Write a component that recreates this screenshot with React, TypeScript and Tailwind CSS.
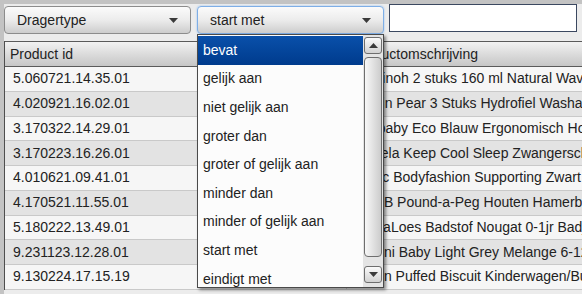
import React from "react";

const rows = [
  ["5.060721.14.35.01", "Lansinoh 2 stuks 160 ml Natural Wave Flesjes"],
  ["4.020921.16.02.01", "Muslin Pear 3 Stuks Hydrofiel Washandjes"],
  ["3.170322.14.29.01", "Minibaby Eco Blauw Ergonomisch Hoofdkussen"],
  ["3.170223.16.26.01", "Ambela Keep Cool Sleep Zwangerschapskussen"],
  ["4.010621.09.41.01", "Magic Bodyfashion Supporting Zwart Voedingsbh"],
  ["4.170521.11.55.01", "PlayrB Pound-a-Peg Houten Hamerbank"],
  ["5.180222.13.49.01", "MamaLoes Badstof Nougat 0-1jr Badjas"],
  ["9.231123.12.28.01", "Bomini Baby Light Grey Melange 6-12m"],
  ["9.130224.17.15.19", "Jollein Puffed Biscuit Kinderwagen/Buggy"],
];

const options = [
  "bevat",
  "gelijk aan",
  "niet gelijk aan",
  "groter dan",
  "groter of gelijk aan",
  "minder dan",
  "minder of gelijk aan",
  "start met",
  "eindigt met",
];

const Arrow = ({ up }: { up?: boolean }) => (
  <svg width="9" height="5" viewBox="0 0 9 5">
    <path d={up ? "M0 5 L4.5 0 L9 5 Z" : "M0 0 L9 0 L4.5 5 Z"} fill="#3a3a3a" />
  </svg>
);

const SelectBox = ({ label, focused }: { label: string; focused?: boolean }) => (
  <div
    className={`mt-[2px] w-[187px] h-[28px] shrink-0 rounded-[4px] border flex items-center justify-between pl-[12px] pr-[12px] bg-gradient-to-b from-[#fbfbfb] via-[#ececec] to-[#cdcdcd] ${
      focused
        ? "border-[#7eaee6] shadow-[0_0_2px_#8fbcf0]"
        : "border-[#8c8c8c]"
    }`}
  >
    <span className="text-[#222]">{label}</span>
    <Arrow />
  </div>
);

export default function App() {
  return (
    <div className="relative w-[582px] h-[294px] overflow-hidden bg-[#c3c3c3] font-['Liberation_Sans',Arial,sans-serif] text-[14px] text-[#222]">
      <div className="ml-[4px] mt-[4px] w-[900px] h-[290px] bg-[#ececec]">
        {/* filter bar */}
        <div className="flex items-start h-[37px]">
          <SelectBox label="Dragertype" />
          <div className="w-[6px] shrink-0" />
          <SelectBox label="start met" focused />
          <div className="w-[5px] shrink-0" />
          <div className="w-[188px] h-[28px] shrink-0 border border-[#3b4860] bg-white" />
        </div>

        {/* table */}
        <div className="border-l border-[#4e4e4e] bg-[#f6f6f6]">
          <div className="flex h-[26px] border-t border-b border-[#5a5a5a] bg-gradient-to-b from-[#f2f2f2] to-[#c6c6c6]">
            <div className="w-[342px] shrink-0 pl-[5px] flex items-center border-r border-[#9a9a9a]">
              Product id
            </div>
            <div className="flex-1 pl-[5px] flex items-center">
              Productomschrijving
            </div>
          </div>
          {rows.map(([id, desc], i) => (
            <div
              key={id}
              className={`flex h-[24.75px] border-b border-[#c9c9c9] ${
                i % 2 === 0 ? "bg-[#f6f6f6]" : "bg-[#e3e3e3]"
              }`}
            >
              <div className="w-[342px] shrink-0 pl-[8px] flex items-center border-r border-[#cfcfcf]">
                {id}
              </div>
              <div className="flex-1 min-w-0 pl-[5px] flex items-center whitespace-nowrap overflow-hidden">
                {desc}
              </div>
            </div>
          ))}
        </div>
      </div>

      {/* open dropdown */}
      <div className="absolute left-[197px] top-[34px] w-[187px] h-[254px] border border-[#4a4a4a] bg-[#fcfcfc] shadow-[2px_2px_3px_rgba(0,0,0,0.45)] flex">
        <div className="w-[165px] pt-[1px] overflow-hidden">
          {options.map((o, i) => (
            <div
              key={o}
              className={`h-[28.6px] pl-[5px] flex items-center ${
                i === 0
                  ? "bg-gradient-to-b from-[#0a50aa] to-[#003b8d] text-white"
                  : "text-[#222]"
              }`}
            >
              {o}
            </div>
          ))}
        </div>
        <div className="flex-1 bg-[#e4e4e4] flex flex-col items-center pt-[2px] pb-[4px] gap-[3px]">
          <div className="w-[18px] h-[17px] rounded-[3px] border border-[#6e6e6e] bg-gradient-to-b from-[#fafafa] to-[#d2d2d2] flex items-center justify-center">
            <Arrow up />
          </div>
          <div className="w-[18px] flex-1 rounded-[4px] border border-[#6e6e6e] bg-gradient-to-r from-[#f8f8f8] to-[#cccccc]" />
          <div className="mt-[6px] w-[18px] h-[17px] rounded-[3px] border border-[#6e6e6e] bg-gradient-to-b from-[#fafafa] to-[#d2d2d2] flex items-center justify-center">
            <Arrow />
          </div>
        </div>
      </div>
    </div>
  );
}
